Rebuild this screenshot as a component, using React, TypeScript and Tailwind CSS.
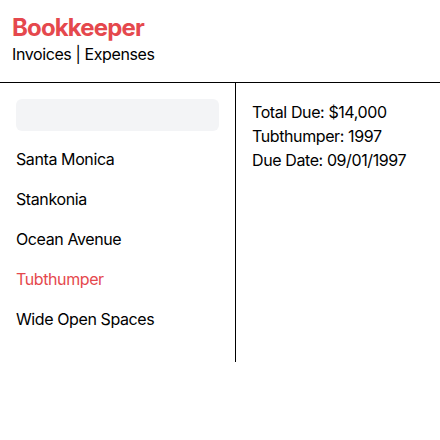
import React, { useState } from 'react';

const invoices = ['Santa Monica', 'Stankonia', 'Ocean Avenue', 'Tubthumper', 'Wide Open Spaces'];

const App: React.FC = () => {
  const [query, setQuery] = useState('');
  const active = 'Tubthumper';

  return (
    <div className="min-h-screen w-full bg-white text-black font-['Inter','Liberation_Sans',sans-serif] tracking-[-0.4px]">
      {/* header */}
      <div className="px-3 pt-[14px] pb-4 border-b border-black">
        <h1 className="text-2xl leading-[28px] font-bold tracking-[-0.85px] text-[#e5484d]">Bookkeeper</h1>
        <nav className="text-base leading-6">Invoices | Expenses</nav>
      </div>

      <div className="flex">
        <nav className="w-[236px] border-r border-black px-4 pt-4 pb-[15px]">
          <input
            value={query}
            onChange={(e) => setQuery(e.target.value)}
            className="block w-full h-[32px] rounded-md bg-[#f3f4f6] px-2 text-base outline-none"
          />
          {invoices.map((name) => (
            <a
              key={name}
              className={`block my-4 text-base leading-6 ${name === active ? 'text-[#e5484d]' : 'text-black'}`}
            >
              {name}
            </a>
          ))}
        </nav>
        <main className="px-4 pt-[17px] text-base leading-6">
          <p>Total Due: $14,000</p>
          <p>Tubthumper: 1997</p>
          <p>Due Date: 09/01/1997</p>
        </main>
      </div>
    </div>
  );
};

export default App;
